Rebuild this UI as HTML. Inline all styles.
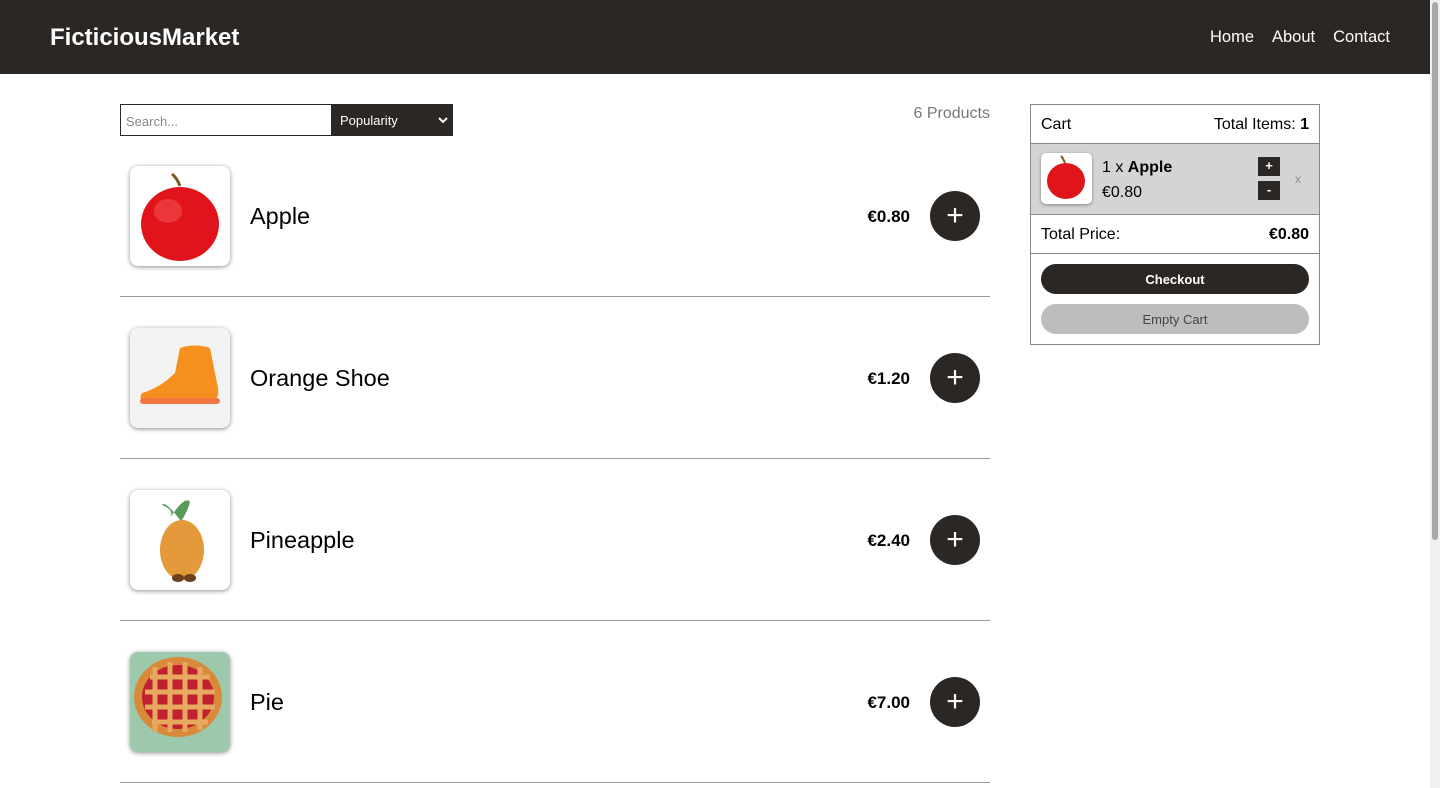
<!DOCTYPE html>
<html><head><meta charset="utf-8"><style>
*{box-sizing:border-box;margin:0;padding:0}
body{width:1440px;height:788px;overflow:hidden;font-family:"Liberation Sans",sans-serif;background:#fff;position:relative;color:#000}
.hdr{position:absolute;left:0;top:0;width:1430px;height:74px;background:#2b2724;color:#fff}
.logo{position:absolute;left:50px;top:24px;font-size:24px;font-weight:bold}
.nav{position:absolute;right:40px;top:28px;font-size:16.5px}
.nav span{margin-left:18px}
.sb{position:absolute;right:0;top:0;width:10px;height:788px;background:#f0f0f0}
.sb i{position:absolute;left:2px;top:2px;width:6px;height:538px;background:#a8a8a8;border-radius:3px}
.search{position:absolute;left:120px;top:104px;width:212px;height:32px;border:1px solid #2b2724;font-size:13px;color:#888;padding:9px 5px}
.sel{position:absolute;left:331px;top:104px;width:122px;height:32px;background:#2b2724;color:#fff;font-size:13px;padding:9px 9px}
.sel svg{position:absolute;right:5px;top:13px}
.count{position:absolute;right:450px;top:105px;font-size:16px;color:#777}
.row{position:absolute;left:120px;width:870px;height:162px;border-bottom:1px solid #999}
.img{position:absolute;left:10px;top:31px;width:100px;height:100px;border-radius:8px;box-shadow:0 1px 5px rgba(0,0,0,.45);overflow:hidden;background:#fff}
.name{position:absolute;left:130px;top:68px;font-size:23.5px}
.price{position:absolute;right:80px;top:72px;font-size:17px;font-weight:bold}
.add{position:absolute;left:810px;top:56px;width:50px;height:50px;border-radius:50%;background:#2b2724;color:#fff;font-size:30px;text-align:center;line-height:50px}
.cart{position:absolute;left:1030px;top:104px;width:290px;height:241px;border:1px solid #888;font-size:16px}
.c1{height:39px;border-bottom:1px solid #888;padding:11px 10px;display:flex;justify-content:space-between}
.c2{height:71px;background:#d4d4d4;border-bottom:1px solid #888;position:relative}
.c3{height:39px;border-bottom:1px solid #888;padding:11px 10px;display:flex;justify-content:space-between}
.btn{position:absolute;left:10px;width:268px;height:30px;border-radius:15px;text-align:center;font-size:13px;line-height:31px}
.sq{position:absolute;left:227px;width:22px;height:19px;background:#2b2724;color:#fff;font-size:13px;text-align:center;line-height:18px;font-weight:bold}
</style></head><body>
<div class="hdr"><div class="logo">FicticiousMarket</div><div class="nav"><span>Home</span><span>About</span><span>Contact</span></div></div>
<div class="sb"><i></i></div>
<div class="search">Search...</div>
<div class="sel">Popularity<svg width="10" height="7" viewBox="0 0 10 7"><path d="M1 1l4 4 4-4" stroke="#fff" stroke-width="2" fill="none"/></svg></div>
<div class="count">6 Products</div>

<div class="row" style="top:135px"><div class="img"><svg width="100" height="100"><path d="M50 20 Q47 12 42 8" stroke="#7a5a20" stroke-width="3" fill="none"/><ellipse cx="50" cy="58" rx="39" ry="37" fill="#e0141a"/><ellipse cx="38" cy="45" rx="14" ry="12" fill="#f05050" opacity=".6"/></svg></div><div class="name">Apple</div><div class="price">€0.80</div><div class="add">+</div></div>
<div class="row" style="top:297px"><div class="img" style="background:#f3f3f3"><svg width="100" height="100"><path d="M12 65 Q30 60 45 45 L50 20 Q65 15 80 20 L88 60 Q90 72 80 73 L15 73 Q8 72 12 65Z" fill="#f5901e"/><rect x="10" y="70" width="80" height="6" rx="3" fill="#f07840"/></svg></div><div class="name">Orange Shoe</div><div class="price">€1.20</div><div class="add">+</div></div>
<div class="row" style="top:459px"><div class="img"><svg width="100" height="100"><path d="M50 30 Q35 10 32 15 Q45 20 40 28 Q55 5 60 12 Q58 20 52 30Z" fill="#5a9a5a"/><ellipse cx="52" cy="60" rx="22" ry="30" fill="#e49a3a"/><ellipse cx="48" cy="88" rx="6" ry="4" fill="#6a4020"/><ellipse cx="60" cy="88" rx="6" ry="4" fill="#6a4020"/></svg></div><div class="name">Pineapple</div><div class="price">€2.40</div><div class="add">+</div></div>
<div class="row" style="top:621px"><div class="img" style="background:#9cc9ac"><svg width="100" height="100"><ellipse cx="48" cy="45" rx="44" ry="40" fill="#d88a3a"/><ellipse cx="48" cy="45" rx="36" ry="32" fill="#c02030"/><g stroke="#e8a860" stroke-width="5"><path d="M20 25L80 25M15 40L85 40M15 55L85 55M22 70L78 70M25 15L25 80M40 10L40 80M55 10L55 80M70 15L70 78"/></g></svg></div><div class="name">Pie</div><div class="price">€7.00</div><div class="add">+</div></div>

<div class="cart">
<div class="c1"><span>Cart</span><span>Total Items: <b>1</b></span></div>
<div class="c2">
<div style="position:absolute;left:10px;top:9px;width:51px;height:51px;background:#fff;border-radius:5px;box-shadow:0 1px 3px rgba(0,0,0,.4)"><svg width="51" height="51"><path d="M24 10Q22 5 20 3" stroke="#7a5a20" stroke-width="2" fill="none"/><ellipse cx="25" cy="28" rx="19" ry="18" fill="#e0141a"/></svg></div>
<div style="position:absolute;left:71px;top:15px">1 x <b>Apple</b></div>
<div style="position:absolute;left:71px;top:40px">€0.80</div>
<div class="sq" style="top:13px">+</div><div class="sq" style="top:37px">-</div>
<div style="position:absolute;left:264px;top:28px;font-size:12px;color:#888">x</div>
</div>
<div class="c3"><span>Total Price:</span><b>€0.80</b></div>
<div class="btn" style="top:159px;background:#2b2724;color:#fff;font-weight:bold">Checkout</div>
<div class="btn" style="top:199px;background:#bdbdbd;color:#444">Empty Cart</div>
</div>
</body></html>
